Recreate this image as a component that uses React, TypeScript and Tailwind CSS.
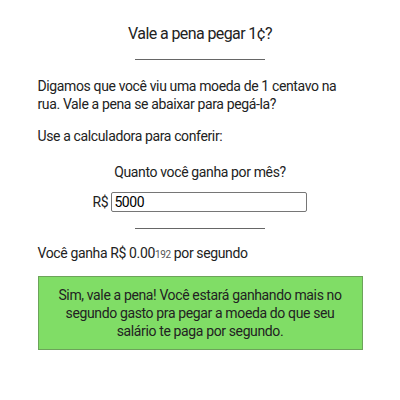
import React from "react";

export default function App() {
  return (
    <div className="min-h-[400px] bg-white font-['Roboto',sans-serif] text-[14px] leading-[18px] tracking-[-0.37px] text-[#222]">
      <div className="w-[325px] mx-auto pt-[24px]">
        <h1 className="text-center text-[16px] leading-[20px] font-normal tracking-[-0.6px]">Vale a pena pegar 1¢?</h1>
        <div className="w-[130px] mx-auto mt-[15px] border-t border-[#666]" />
        <p className="mt-[17px] w-[310px]">Digamos que você viu uma moeda de 1 centavo na rua. Vale a pena se abaixar para pegá-la?</p>
        <p className="mt-[14px]">Use a calculadora para conferir:</p>
        <p className="mt-[18px] text-center">Quanto você ganha por mês?</p>
        <div className="mt-[11px] flex justify-center items-center gap-[3px]">
          <span>R$</span>
          <input
            className="w-[196px] h-[20px] border border-[#767676] rounded-[2px] px-[2px] text-[14px] tracking-[-0.37px] text-black outline-none"
            defaultValue="5000"
          />
        </div>
        <div className="w-[130px] mx-auto mt-[16px] border-t border-[#666]" />
        <p className="mt-[15px]">
          Você ganha R$ 0.00<span className="text-[10px] text-[#555]">192</span> por segundo
        </p>
        <div className="mt-[12px] bg-[#80dd66] border border-[#6ca35a] px-[16px] py-[9px] text-center leading-[18px]">
          Sim, vale a pena! Você estará ganhando mais no segundo gasto pra pegar a moeda do que seu salário te paga por segundo.
        </div>
      </div>
    </div>
  );
}
